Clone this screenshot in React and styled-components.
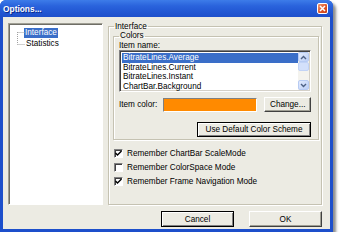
import React from 'react';
import styled, { createGlobalStyle } from 'styled-components';

const Global = createGlobalStyle`
  html, body { margin: 0; padding: 0; background: #ffffff; }
  body {
    font-family: "Liberation Sans", Arial, sans-serif;
    font-size: 8.2px;
    color: #000;
  }
  * { box-sizing: border-box; }
`;

const Window = styled.div`
  width: 333px;
  height: 232px;
  display: flex;
  flex-direction: column;
  padding: 0 3px 3px 3px;
  background: #1d4fcb;
  border-radius: 6px 6px 0 0;
  box-shadow: 3px 3px 3px rgba(0, 0, 0, 0.45);
`;

const TitleBar = styled.div`
  height: 17px;
  margin: 0 -3px;
  padding: 0 5px 0 3px;
  display: flex;
  align-items: center;
  justify-content: space-between;
  border-radius: 6px 6px 0 0;
  background: linear-gradient(#3d7ce9 0%, #2a63dc 35%, #2257d3 70%, #1d4fcb 100%);
`;

const Title = styled.span`
  color: #fff;
  font-weight: bold;
  font-size: 8.4px;
  text-shadow: 1px 1px #0a2a8c;
`;

const CloseBtn = styled.div`
  width: 11px;
  height: 11px;
  border: 1px solid #fff;
  border-radius: 2px;
  background: linear-gradient(135deg, #f09a74, #dc4f22 60%, #c8401a);
  display: flex;
  align-items: center;
  justify-content: center;
`;

const Client = styled.div`
  flex: 1;
  display: flex;
  flex-direction: column;
  background: #ecebe3;
  padding: 6px 8px 2px 5px;
`;

const Body = styled.div`
  display: flex;
  gap: 5px;
  height: 182px;
`;

const Tree = styled.div`
  width: 95px;
  background: #fff;
  border: 1px solid;
  border-color: #a09f94 #fff #fff #a09f94;
  box-shadow: inset 1px 1px #6f6e66;
  position: relative;
  padding: 4px 0 0 15px;
`;

const TreeLines = styled.svg`
  position: absolute;
  left: 7px;
  top: 7px;
`;

const TreeItem = styled.div`
  height: 10px;
  line-height: 10px;
  padding: 0 1px;
  margin-left: ${p => (p.$sel ? 0 : 1)}px;
  display: inline-block;
  color: ${p => (p.$sel ? '#fff' : '#000')};
  background: ${p => (p.$sel ? '#3a6ec8' : 'transparent')};
`;

const TreeRow = styled.div`
  height: 11px;
`;

const Group = styled.fieldset`
  margin: ${p => (p.$inner ? '2px 2px 0 4px' : '0')};
  padding: 0;
  min-width: 0;
  border: 1px solid #c5c2b2;
  box-shadow: inset 1px 1px #fff, 1px 1px #fff;
  flex: ${p => (p.$inner ? 'none' : '1')};
  display: flex;
  flex-direction: column;
`;

const Legend = styled.legend`
  padding: 0 1px;
  margin-left: ${p => p.$ml}px;
  line-height: ${p => p.$lh}px;
`;

const ColorsBody = styled.div`
  padding: 1px 7px 2px 5px;
  display: flex;
  flex-direction: column;
`;

const Label = styled.div`
  line-height: 9px;
`;

const ListBox = styled.div`
  height: 42px;
  display: flex;
  border: 1px solid;
  border-color: #808080 #fff #fff #808080;
  box-shadow: inset 1px 1px #404040, inset -1px -1px #d4d0c8;
  background: #fff;
  padding: 2px 1px 2px 2px;
`;

const Items = styled.div`
  flex: 1;
  display: flex;
  flex-direction: column;
`;

const Item = styled.div`
  height: 9.5px;
  line-height: 9.5px;
  padding-left: 1px;
  white-space: nowrap;
  color: ${p => (p.$sel ? '#fff' : '#000')};
  background: ${p => (p.$sel ? '#3a6ec8' : 'transparent')};
`;

const ScrollBar = styled.div`
  width: 11px;
  display: flex;
  flex-direction: column;
  background: #f4f3ee;
  margin: -1px 0;
`;

const ScrollBtn = styled.div`
  height: 10px;
  border: 1px solid #b7cbf3;
  border-radius: 2px;
  background: linear-gradient(135deg, #e2ebfd, #bccff7);
  display: flex;
  align-items: center;
  justify-content: center;
`;

const Track = styled.div`
  flex: 1;
  display: flex;
  flex-direction: column;
`;

const Thumb = styled.div`
  height: 9px;
  border: 1px solid #c2d3f6;
  border-radius: 2px;
  background: #d3e0fb;
`;

const ColorRow = styled.div`
  display: flex;
  align-items: center;
  margin-top: 5px;
`;

const ColorLabel = styled.div`
  width: 44px;
  white-space: nowrap;
`;

const Swatch = styled.div`
  width: 96px;
  height: 14px;
  background: #ff8a00;
  border: 1px solid;
  border-color: #808080 #fff #fff #808080;
  margin-right: 7px;
`;

const Button = styled.button`
  font-family: inherit;
  font-size: 8.2px;
  padding: 0;
  white-space: nowrap;
  width: ${p => p.$w}px;
  height: ${p => p.$h || 15}px;
  background: #ecebe3;
  color: #000;
  border: 1px solid;
  border-color: ${p => (p.$strong ? '#000' : '#fff #404040 #404040 #fff')};
  box-shadow: ${p =>
    p.$strong
      ? 'inset 1px 1px #fff, inset -1px -1px #808080'
      : 'inset -1px -1px #a09f94'};
`;

const RightAlign = styled.div`
  display: flex;
  justify-content: flex-end;
  margin-top: 10px;
`;

const Checks = styled.div`
  display: flex;
  flex-direction: column;
  gap: 5px;
  padding: 9px 0 0 5px;
`;

const CheckRow = styled.div`
  display: flex;
  align-items: center;
  gap: 4px;
  height: 9px;
  white-space: nowrap;
`;

const Box = styled.div`
  width: 9px;
  height: 9px;
  flex: none;
  background: #fff;
  border: 1px solid;
  border-color: #808080 #fff #fff #808080;
  box-shadow: inset 1px 1px #404040;
  display: flex;
  align-items: center;
  justify-content: center;
`;

const ButtonRow = styled.div`
  display: flex;
  justify-content: flex-end;
  gap: 15px;
  margin-top: 6px;
`;

const Check = ({ on }) => (
  <Box>
    {on && (
      <svg width="7" height="7" viewBox="0 0 7 7">
        <path d="M0.5 3 L2.5 5 L6.5 1" stroke="#000" strokeWidth="1.4" fill="none" />
      </svg>
    )}
  </Box>
);

const Chevron = ({ down }) => (
  <svg width="7" height="5" viewBox="0 0 7 5">
    <path
      d={down ? 'M1 1 L3.5 3.5 L6 1' : 'M1 4 L3.5 1.5 L6 4'}
      stroke="#4d6185"
      strokeWidth="1.4"
      fill="none"
    />
  </svg>
);

export default function App() {
  return (
    <>
      <Global />
      <Window>
        <TitleBar>
          <Title>Options...</Title>
          <CloseBtn>
            <svg width="7" height="7" viewBox="0 0 7 7">
              <path d="M1 1 L6 6 M6 1 L1 6" stroke="#fff" strokeWidth="1.5" />
            </svg>
          </CloseBtn>
        </TitleBar>
        <Client>
          <Body>
            <Tree>
              <TreeLines width="10" height="16" viewBox="0 0 10 16">
                <path
                  d="M1.5 1 V13.5 M1.5 1.5 H9 M1.5 13.5 H9"
                  stroke="#a0a0a0"
                  strokeWidth="1"
                  strokeDasharray="1 1"
                  fill="none"
                />
              </TreeLines>
              <TreeRow>
                <TreeItem $sel>Interface</TreeItem>
              </TreeRow>
              <TreeRow>
                <TreeItem>Statistics</TreeItem>
              </TreeRow>
            </Tree>
            <Group>
              <Legend $ml={5} $lh={7}>Interface</Legend>
              <Group $inner>
                <Legend $ml={5} $lh={8}>Colors</Legend>
                <ColorsBody>
                  <Label>Item name:</Label>
                  <ListBox>
                    <Items>
                      <Item $sel>BitrateLines.Average</Item>
                      <Item>BitrateLines.Current</Item>
                      <Item>BitrateLines.Instant</Item>
                      <Item>ChartBar.Background</Item>
                    </Items>
                    <ScrollBar>
                      <ScrollBtn>
                        <Chevron />
                      </ScrollBtn>
                      <Track>
                        <Thumb />
                      </Track>
                      <ScrollBtn>
                        <Chevron down />
                      </ScrollBtn>
                    </ScrollBar>
                  </ListBox>
                  <ColorRow>
                    <ColorLabel>Item color:</ColorLabel>
                    <Swatch />
                    <Button $w={47}>Change...</Button>
                  </ColorRow>
                  <RightAlign>
                    <Button $w={114} $strong>
                      Use Default Color Scheme
                    </Button>
                  </RightAlign>
                </ColorsBody>
              </Group>
              <Checks>
                <CheckRow>
                  <Check on />
                  Remember ChartBar ScaleMode
                </CheckRow>
                <CheckRow>
                  <Check />
                  Remember ColorSpace Mode
                </CheckRow>
                <CheckRow>
                  <Check on />
                  Remember Frame Navigation Mode
                </CheckRow>
              </Checks>
            </Group>
          </Body>
          <ButtonRow>
            <Button $w={73} $h={16} $strong>
              Cancel
            </Button>
            <Button $w={73} $h={16}>
              OK
            </Button>
          </ButtonRow>
        </Client>
      </Window>
    </>
  );
}
